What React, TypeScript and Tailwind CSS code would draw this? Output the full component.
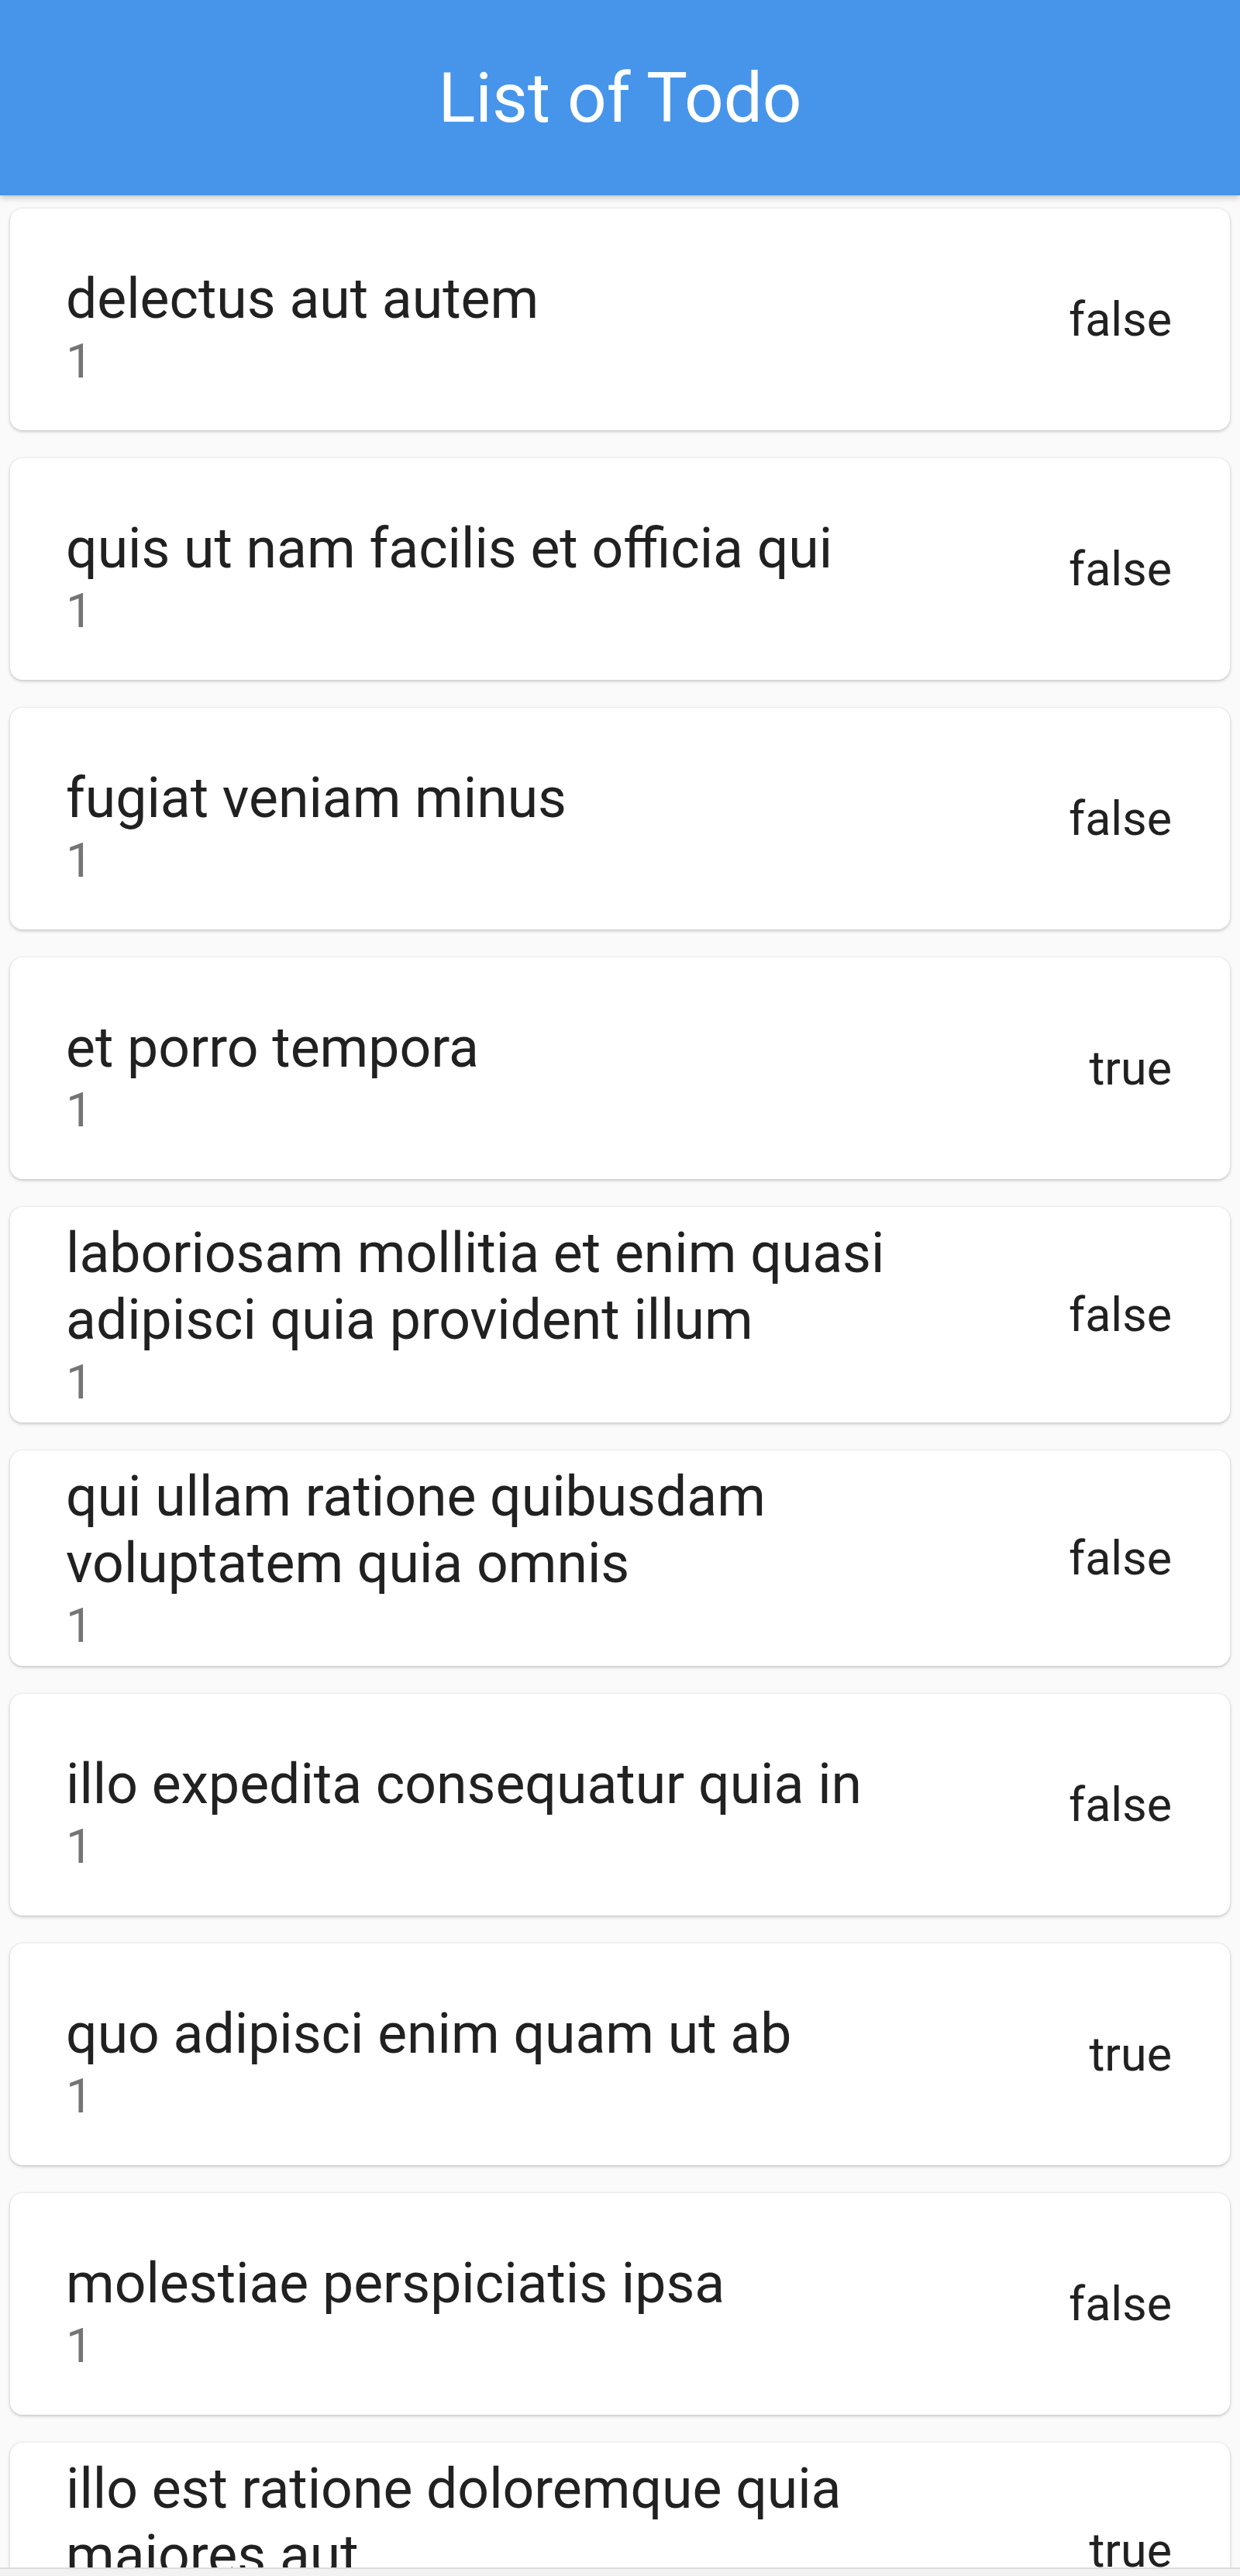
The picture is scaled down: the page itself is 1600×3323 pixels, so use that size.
import React from 'react';

type Todo = { title: string; userId: number; completed: boolean; wrap?: boolean };

const todos: Todo[] = [
  { title: 'delectus aut autem', userId: 1, completed: false },
  { title: 'quis ut nam facilis et officia qui', userId: 1, completed: false },
  { title: 'fugiat veniam minus', userId: 1, completed: false },
  { title: 'et porro tempora', userId: 1, completed: true },
  { title: 'laboriosam mollitia et enim quasi adipisci quia provident illum', userId: 1, completed: false, wrap: true },
  { title: 'qui ullam ratione quibusdam voluptatem quia omnis', userId: 1, completed: false, wrap: true },
  { title: 'illo expedita consequatur quia in', userId: 1, completed: false },
  { title: 'quo adipisci enim quam ut ab', userId: 1, completed: true },
  { title: 'molestiae perspiciatis ipsa', userId: 1, completed: false },
  { title: 'illo est ratione doloremque quia maiores aut', userId: 1, completed: true, wrap: true },
];

function TodoCard({ todo }: { todo: Todo }) {
  return (
    <div
      className={
        'shrink-0 mx-[13px] bg-white rounded-[16px] shadow-[0_2px_4px_rgba(0,0,0,0.18),0_0_3px_rgba(0,0,0,0.1)] flex items-stretch pl-[72px] pr-[75px] ' +
        (todo.wrap ? 'h-[278px]' : 'h-[286px]')
      }
    >
      <div className={'flex-1 min-w-0 ' + (todo.wrap ? 'pt-[17px]' : 'pt-[74px]')}>
        <p className="text-[71.5px] leading-[86px] text-[#212121]">{todo.title}</p>
        <p className="text-[62px] leading-[74px] text-[#757575]">{todo.userId}</p>
      </div>
      <div className="ml-[71px] flex items-center">
        <span className="text-[61px] leading-[74px] text-[#212121]">{String(todo.completed)}</span>
      </div>
    </div>
  );
}

export default function App() {
  return (
    <div className="h-[3323px] w-[1600px] overflow-hidden bg-[#fafafa] flex flex-col" style={{ fontFamily: 'Roboto, "Noto Sans", sans-serif' }}>
      <header className="relative z-10 h-[252px] shrink-0 bg-[#4695ea] flex items-center justify-center shadow-[0_3px_8px_rgba(0,0,0,0.22)]">
        <h1 className="text-[89px] leading-none text-white font-normal">List of Todo</h1>
      </header>
      <div className="h-[3060px] shrink-0 overflow-hidden flex flex-col gap-[36px] pt-[17px]">
        {todos.map((t, i) => (
          <TodoCard key={i} todo={t} />
        ))}
      </div>
      <div className="flex-1 bg-[#f2f2f2] border-t-2 border-[#dcdcdc]" />
    </div>
  );
}
